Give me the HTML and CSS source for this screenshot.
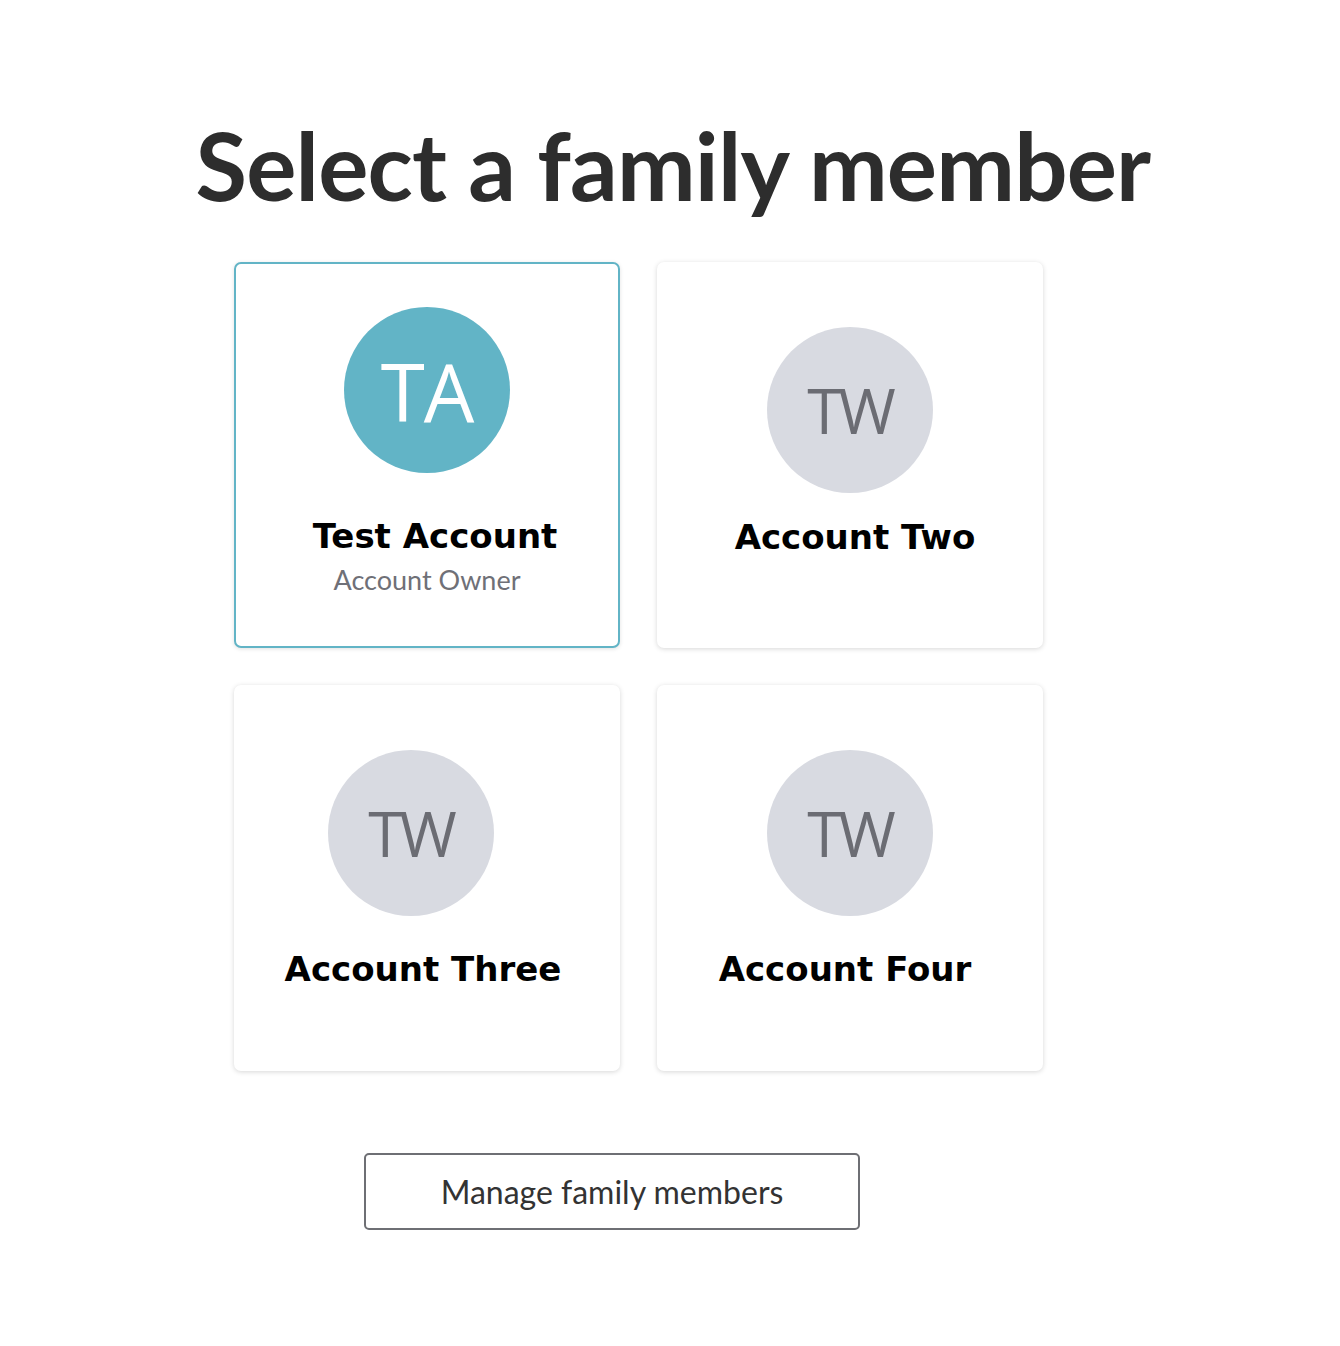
FILE: index.html
```html
<!DOCTYPE html>
<html lang="en">

<head>
    <meta charset="UTF-8">
    <meta name="viewport" content="width=device-width, initial-scale=1.0">
    <title>Select a family member</title>
    <link rel="stylesheet" href="styles.css">
</head>

<body>
    <div class="page">
        <h1 class="title">Select a family member</h1>

        <div class="members">
            <div class="card active">
                <div class="avatar owner">TA</div>
                <div class="name name-1">Test Account</div>
                <div class="role">Account Owner</div>
            </div>
            <div class="card">
                <div class="avatar">TW</div>
                <div class="name name-2">Account Two</div>
            </div>
            <div class="card">
                <div class="avatar avatar-3">TW</div>
                <div class="name name-3">Account Three</div>
            </div>
            <div class="card">
                <div class="avatar">TW</div>
                <div class="name name-4">Account Four</div>
            </div>
        </div>

        <div class="actions">
            <div class="manage-btn">Manage family members</div>
        </div>
    </div>
</body>

</html>
```

FILE: styles.css
```css
* {
    box-sizing: border-box;
}

body {
    margin: 0px;
    padding: 0px;
    background-color: #ffffff;
    font-family: "Lato", "Liberation Sans", sans-serif;
}

.page {
    width: 1340px;
    padding-top: 110px;
}

.title {
    margin: 0px;
    padding-left: 6px;
    text-align: center;
    font-size: 94px;
    font-weight: 700;
    line-height: 110px;
    color: #2d2d2d;
    letter-spacing: -0.8px;
}

.members {
    width: 810px;
    margin: 42px 0px 0px 234px;
    display: grid;
    grid-template-columns: 386px 386px;
    gap: 37px 37px;
}

.card {
    height: 386px;
    background-color: #fff;
    border-radius: 7px;
    box-shadow: 0 1px 5px rgba(0, 0, 0, 0.16);
    display: flex;
    flex-direction: column;
    align-items: center;
    padding-top: 65px;
}

.card.active {
    border: 2px solid #62b4c6;
    box-shadow: 0 1px 4px rgba(0, 0, 0, 0.12);
    padding-top: 43px;
}

.avatar {
    width: 166px;
    height: 166px;
    border-radius: 50%;
    background-color: #d8dae1;
    color: #6b6c73;
    display: flex;
    justify-content: center;
    align-items: center;
    font-family: "Open Sans", sans-serif;
    font-size: 62px;
    letter-spacing: -3px;
    flex-shrink: 0;
}

.avatar.owner {
    background-color: #62b4c6;
    color: #ffffff;
    font-size: 80px;
    letter-spacing: -1px;
}

.avatar-3 {
    margin-left: -32px;
}

.name {
    margin-top: 20px;
    font-family: "DejaVu Sans", "Verdana", sans-serif;
    font-weight: bold;
    font-size: 34px;
    line-height: 48px;
    color: #000;
}

.name-1 {
    margin-top: 39px;
    margin-left: 16px;
}

.name-2 {
    margin-left: 10px;
}

.name-3 {
    margin-top: 29px;
    margin-left: -8px;
}

.name-4 {
    margin-top: 29px;
    margin-left: -10px;
}

.role {
    margin-top: 2px;
    font-size: 27px;
    line-height: 36px;
    color: #6f7077;
}

.actions {
    margin-top: 82px;
    padding-left: 364px;
}

.manage-btn {
    width: 496px;
    height: 77px;
    border: 2px solid #6e6f74;
    border-radius: 5px;
    display: flex;
    justify-content: center;
    align-items: center;
    font-size: 32px;
    color: #333;
}
```
